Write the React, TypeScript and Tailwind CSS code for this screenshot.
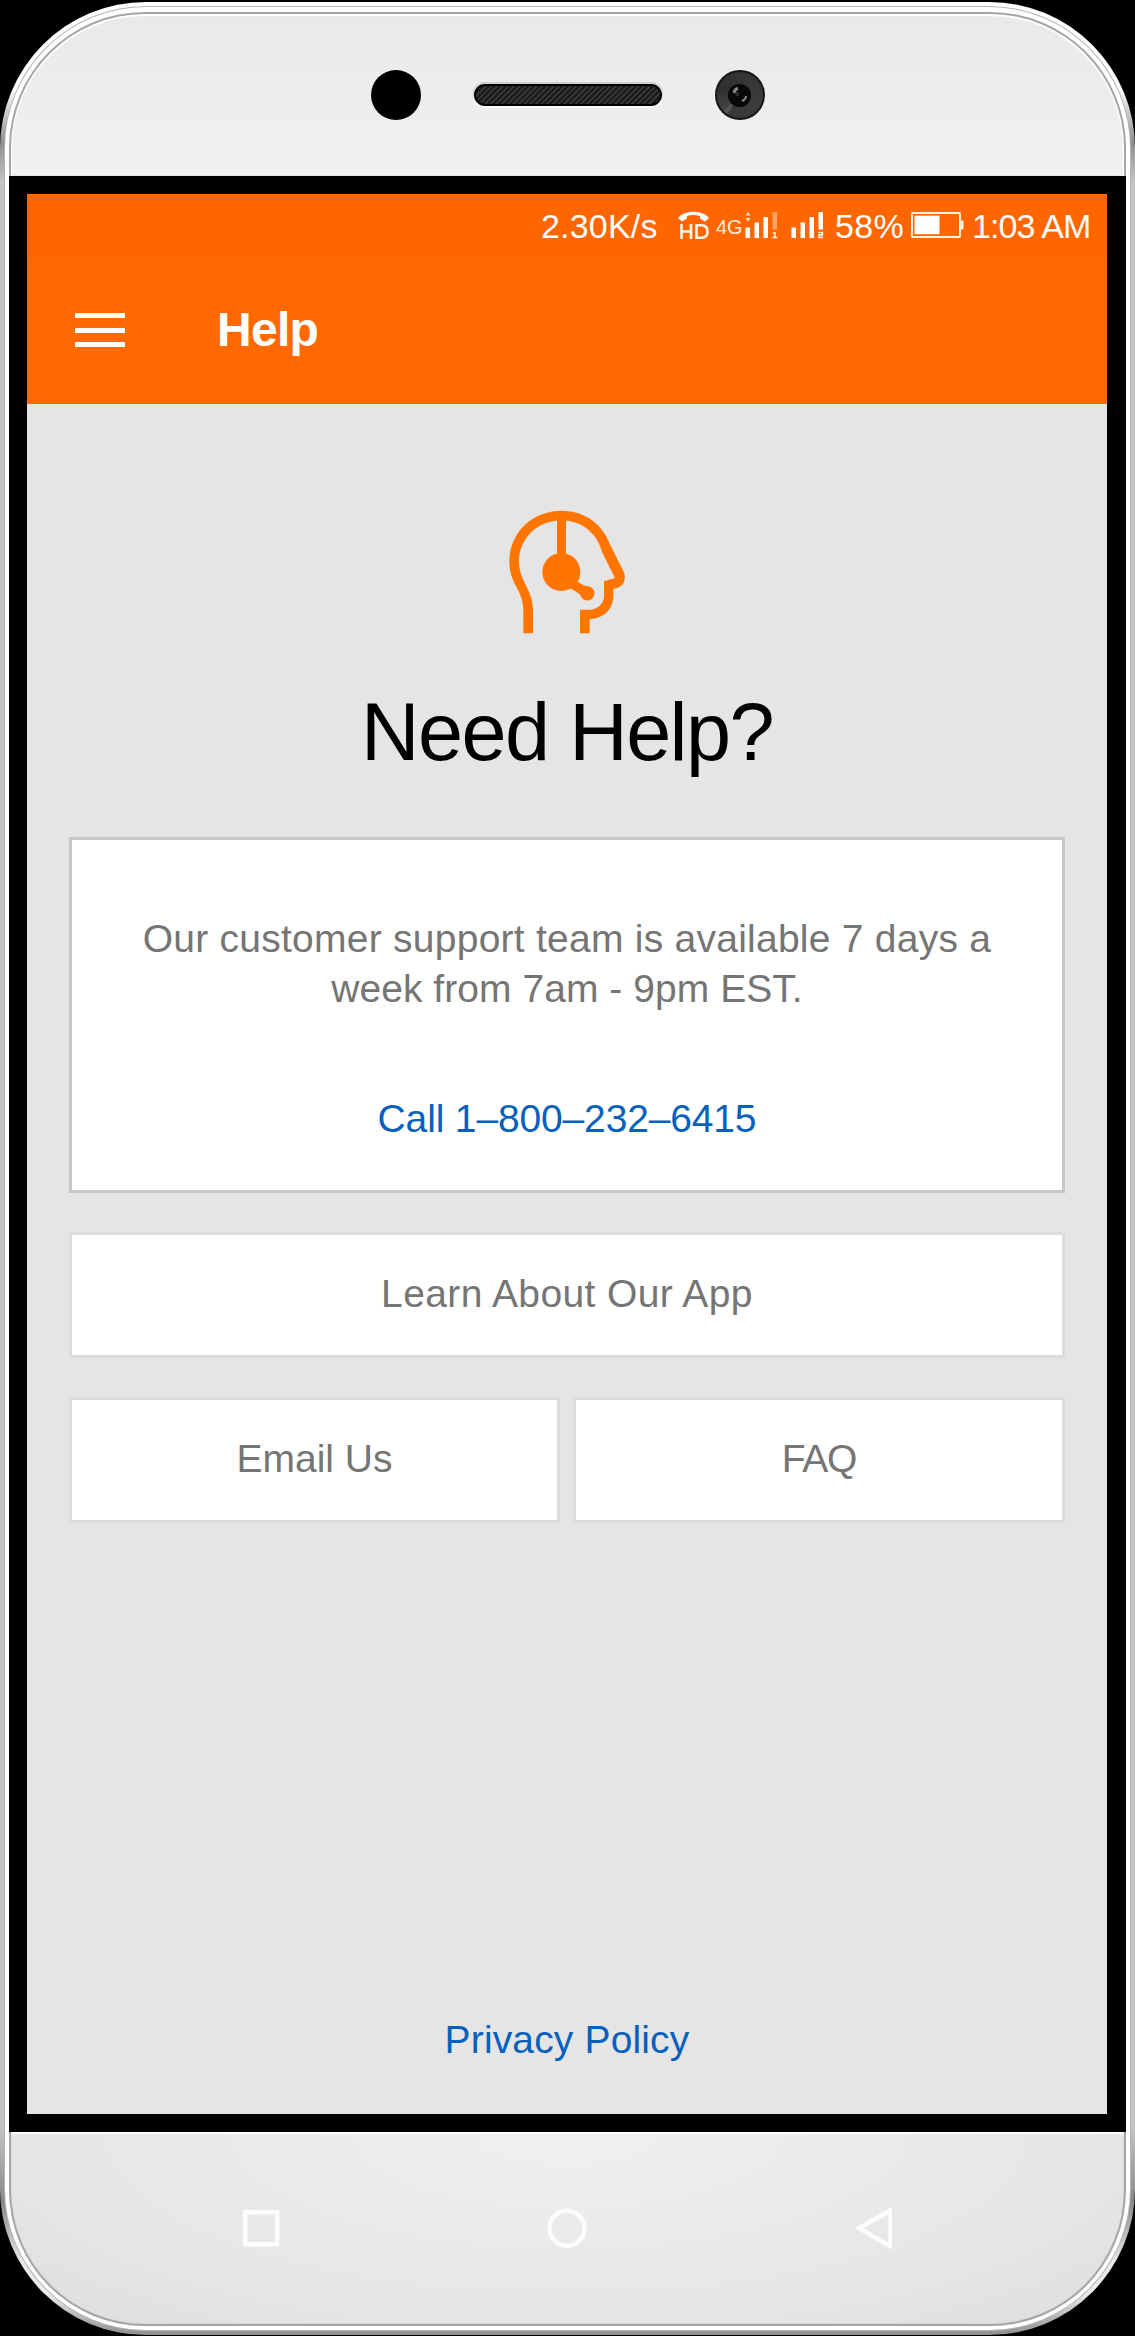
import type { ReactNode } from "react";

function HeadsetIcon() {
  return (
    <svg width="170" height="160" viewBox="0 0 510 480" fill="#ff7500" className="block">
      <path d="M130 430 V358 C130 300 88 282 88 215 C88 125 160 62 244 62 C318 62 370 106 391 165 L432 247 C440 272 428 295 400 296 V318 C400 358 369 387 329 387 V430 H300 V359 H329 C352 359 372 341 372 318 V274 L405 264 L367 188 C352 130 308 96 258 92 V200 H231 V92 C162 98 117 152 117 215 C117 272 159 300 159 358 V430 Z" />
      <circle cx="244" cy="246" r="57" />
      <path d="M280 280 L322 310" stroke="#ff7500" strokeWidth="24" />
      <path d="M286 268 Q300 288 326 289 L318 331 Q298 308 268 293 Z" />
      <circle cx="322" cy="310" r="21.5" />
    </svg>
  );
}

function HdCallIcon() {
  return (
    <svg width="32" height="29" viewBox="0 0 32 29" fill="none" stroke="#fff8e8" className="block">
      <path d="M0 7 C6 -1.500 25 -1.500 31 7 L27 10.500 L22 7.500 V5 C18 3.500 13 3.500 9 5 V7.500 L4 10.500 Z" fill="#fff" stroke="none" />
      <path d="M3.500 13 V28 M13 13 V28 M3.500 20.500 H13" strokeWidth="2.600" />
      <path d="M18.500 14.300 H23.500 Q29.500 14.300 29.500 20.500 T23.500 26.700 H18.500 Z" strokeWidth="2.600" />
    </svg>
  );
}

function Signal({ sim, faded, arrows }: { sim: "1" | "2"; faded?: boolean; arrows?: boolean }) {
  return (
    <svg width="33" height="27" viewBox="0 0 33 27" fill="#fff" className="block">
      {arrows && <path d="M0.500 3.500 L3 0 L5.500 3.500 Z M0.500 6 H5.500 L3 9.500 Z" fill="#ffe9d0" />}
      <path d="M0.500 15.500 H5 V26 H0.500 Z M9.500 10.500 H14 V26 H9.500 Z M18.500 5 H23 V26 H18.500 Z" />
      <path d="M27.500 0 H32 V17.500 H27.500 Z" fill={faded ? "#ffa466" : "#fff"} />
      {sim === "1" ? (
        <path d="M28 21 H30 V25.500 M27.500 25.500 H32.500" stroke="#fff" strokeWidth="1.500" fill="none" />
      ) : (
        <path d="M27.500 20.500 H31.500 V23 H28 V25.500 H32" stroke="#fff" strokeWidth="1.400" fill="none" />
      )}
    </svg>
  );
}

function Battery() {
  return (
    <svg width="53" height="27" viewBox="0 0 53 27" fill="none" className="block">
      <rect x="1" y="1" width="48" height="24" rx="1" stroke="#fff3dc" strokeWidth="2" />
      <rect x="3.500" y="3.700" width="25" height="18.500" fill="#fff" />
      <rect x="50" y="8.500" width="2.500" height="9" fill="#fff3dc" />
    </svg>
  );
}

function Box({ children, className }: { children: ReactNode; className: string }) {
  return (
    <button className={`flex h-[126px] items-center justify-center border-[3px] border-[#dcdcdc] bg-white pb-[3px] text-[39px] leading-[50px] text-[#757575] ${className}`}>
      {children}
    </button>
  );
}

function Screen() {
  return (
    <div className="flex h-[1920px] w-[1080px] flex-col bg-[#e5e5e5]">
      <header className="h-[210px] bg-[#ff6900] text-white">
        <div className="flex h-[63px] items-start bg-[#ff6600] pl-[514px] pt-[11px] text-[34px] leading-[42px] whitespace-nowrap">
          <span className="w-[137px] tracking-[0.2px]">2.30K/s</span>
          <span className="w-[38px] pt-[6px]"><HdCallIcon /></span>
          <span className="w-[29px] pt-[1px] text-[20px] text-[#ffeedd]">4G</span>
          <span className="w-[46px] pt-[7px]"><Signal sim="1" faded arrows /></span>
          <span className="w-[44px] pt-[7px]"><Signal sim="2" /></span>
          <span className="w-[76px] tracking-[0.4px]">58%</span>
          <span className="w-[61px] pt-[7px]"><Battery /></span>
          <span className="tracking-[-0.9px]">1:03 AM</span>
        </div>
        <div className="flex pl-[48px] pt-[43px]">
          <div className="mt-[13px] flex h-[34px] w-[50px] flex-col justify-between">
            <i className="h-[5px] bg-white" />
            <i className="h-[5px] bg-white" />
            <i className="h-[5px] bg-white" />
          </div>
          <h1 className="ml-[92px] text-[48px] font-bold leading-[60px] tracking-[-0.7px]">Help</h1>
        </div>
      </header>
      <main className="flex flex-1 flex-col items-center">
        <div className="mr-[4px] mt-[86px]"><HeadsetIcon /></div>
        <h2 className="mt-[32px] text-[81px] leading-[100px] tracking-[-1.6px] text-black">Need Help?</h2>
        <section className="mt-[55px] flex h-[356px] w-[996px] flex-col items-center border-[3px] border-[#c6c6c6] bg-white pt-[74px] text-center text-[39px] leading-[50px] text-[#757575]">
          <p className="tracking-[0.25px]">
            Our customer support team is available 7 days a
            <br />
            <span className="tracking-[0.05px]">week from 7am - 9pm EST.</span>
          </p>
          <a className="mt-[80px] tracking-[-0.15px] text-[#0561bd]">Call 1–800–232–6415</a>
        </section>
        <Box className="mt-[39px] w-[996px] tracking-[0.4px]">Learn About Our App</Box>
        <div className="mt-[39px] flex w-[996px] justify-between">
          <Box className="w-[491px]">Email Us</Box>
          <Box className="w-[492px] tracking-[-1.2px]">FAQ</Box>
        </div>
        <a className="mt-auto mb-[49px] text-[39px] leading-[50px] tracking-[0.15px] text-[#0561bd]">Privacy Policy</a>
      </main>
    </div>
  );
}

function TopBezel() {
  return (
    <div className="flex h-[160px] items-start justify-center gap-[51px] rounded-t-[133px] border-b border-[#e4e4e4] bg-[linear-gradient(#e9e9e9,#f1f1f1)] pt-[54px]">
      <div className="size-[50px] rounded-full bg-black" />
      <div className="mt-[12px] flex rounded-full bg-gradient-to-b from-[#cccccc] to-white p-[2px]">
        <div className="h-[22px] w-[188px] rounded-full border-2 border-black bg-[repeating-linear-gradient(135deg,#1b1b1b_0px,#1b1b1b_2px,#484848_3px,#242424_4px)]" />
      </div>
      <div className="flex size-[50px] items-center justify-center rounded-full border-2 border-[#161616] bg-[conic-gradient(#343434,#3b3b3b_30%,#393939_58%,#5a5a5a_61%,#424242_64%,#303030_80%,#343434)]">
        <div className="flex size-[23px] items-center justify-center rounded-full bg-[#080808]">
          <svg width="20" height="20" viewBox="0 0 20 20" fill="none" className="block">
            <path d="M4 8 Q4.500 4 8 3.500" stroke="#858585" strokeWidth="3" />
            <path d="M12 16 Q16 14 16 11" stroke="#8a8a8a" strokeWidth="2" />
            <circle cx="7" cy="9" r="2" fill="#333" />
          </svg>
        </div>
      </div>
    </div>
  );
}

function BottomBezel() {
  return (
    <div className="flex flex-1 justify-center rounded-b-[133px] border-t-2 border-white bg-[radial-gradient(ellipse_760px_260px_at_50%_0%,#f0f0f0,#e5e5e5_75%,#dedede)] pt-[71px]">
      <svg width="650" height="50" viewBox="0 0 650 50" fill="none" stroke="#fcfcfc" strokeWidth="4.500" className="mr-px block">
        <rect x="3.200" y="7.200" width="32" height="32" />
        <circle cx="325" cy="23.300" r="17.500" />
        <path d="M617 23.200 L648.500 5.300 V41.200 Z" />
      </svg>
    </div>
  );
}

export default function App() {
  return (
    <div className="h-[2336px] w-[1135px] bg-black pt-[2px] font-['Liberation_Sans',Arial,sans-serif]">
      <div className="h-[2333px] rounded-[146px] bg-[linear-gradient(#ffffff_0px,#ffffff_85px,#8d8d8d_140px,#c4c4c4_180px,#c4c4c4_2125px,#888888_2200px,#e8e8e8_2260px,#eeeeee_2290px,#8f8f8f_2333px)] p-[4px]">
        <div className="h-full rounded-[142px] bg-[#b5b5b5] p-px">
          <div className="h-full rounded-[141px] bg-white px-[4px] pt-[5px] pb-[4px]">
            <div className="h-full rounded-[136px] bg-[#a5a5a5] p-[2px]">
              <div className="h-full rounded-[134px] bg-[linear-gradient(#ffffff,#ffffff_50%,#d8d8d8)] px-px pt-[2px] pb-px">
                <div className="flex h-full flex-col">
                  <TopBezel />
                  <div className="-mx-[3px] shrink-0 bg-black p-[18px]">
                    <Screen />
                  </div>
                  <BottomBezel />
                </div>
              </div>
            </div>
          </div>
        </div>
      </div>
    </div>
  );
}
